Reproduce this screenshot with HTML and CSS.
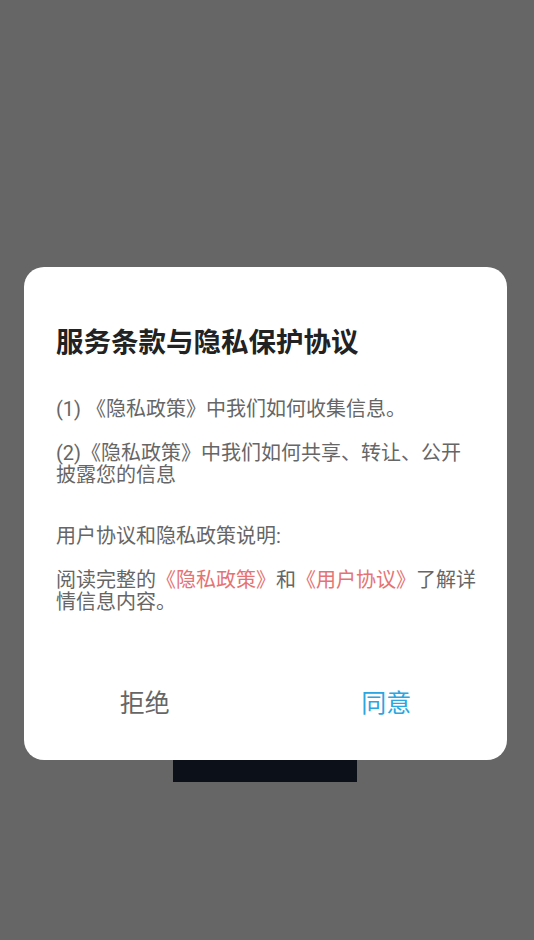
FILE: index.html
```html
<!DOCTYPE html>
<html lang="zh-CN">
<head>
<meta charset="utf-8">
<title>服务条款与隐私保护协议</title>
<link rel="stylesheet" href="styles.css">
</head>
<body>
<div class="page">
  <div class="splash"></div>
</div>
<div class="dialog">
  <h1 class="title">服务条款与隐私保护协议</h1>
  <p class="para first">(1) 《隐私政策》中我们如何收集信息。</p>
  <p class="para">(2)《隐私政策》中我们如何共享、转让、公开披露您的信息</p>
  <p class="para section">用户协议和隐私政策说明:</p>
  <p class="para">阅读完整的<span class="link">《隐私政策》</span>和<span class="link">《用户协议》</span>了解详情信息内容。</p>
  <div class="actions">
    <div class="btn reject">拒绝</div>
    <div class="btn agree">同意</div>
  </div>
</div>
</body>
</html>
```
FILE: styles.css
```css
html, body {
  margin: 0;
  padding: 0;
}
body {
  background: #666666;
  font-family: "Roboto", "Noto Sans CJK SC", sans-serif;
  width: 534px;
  height: 940px;
  overflow: hidden;
}
.page {
  height: 940px;
  padding-top: 560px;
  box-sizing: border-box;
}
.splash {
  margin-left: 173px;
  width: 184px;
  height: 222px;
  background: #0b1019;
}
.dialog {
  position: fixed;
  left: 24px;
  top: 267px;
  width: 483px;
  height: 493px;
  box-sizing: border-box;
  background: #ffffff;
  border-radius: 20px;
  padding: 58px 28px 0 32px;
}
.title {
  margin: 0;
  font-size: 27.5px;
  line-height: 36px;
  font-weight: bold;
  color: #222222;
}
.para {
  margin: 22px 0 0;
  font-size: 20px;
  line-height: 22px;
  color: #666666;
}
.para.first {
  margin-top: 37px;
}
.para.section {
  margin-top: 39px;
}
.link {
  display: inline-block;
  line-height: 22px;
  height: 22px;
  color: #e57373;
}
.actions {
  display: flex;
  margin: 58px -28px 0 -32px;
  height: 60px;
}
.btn {
  flex: 1;
  display: flex;
  align-items: center;
  justify-content: center;
  font-size: 25px;
}
.reject {
  color: #666666;
}
.agree {
  color: #2ba6e0;
}
```
